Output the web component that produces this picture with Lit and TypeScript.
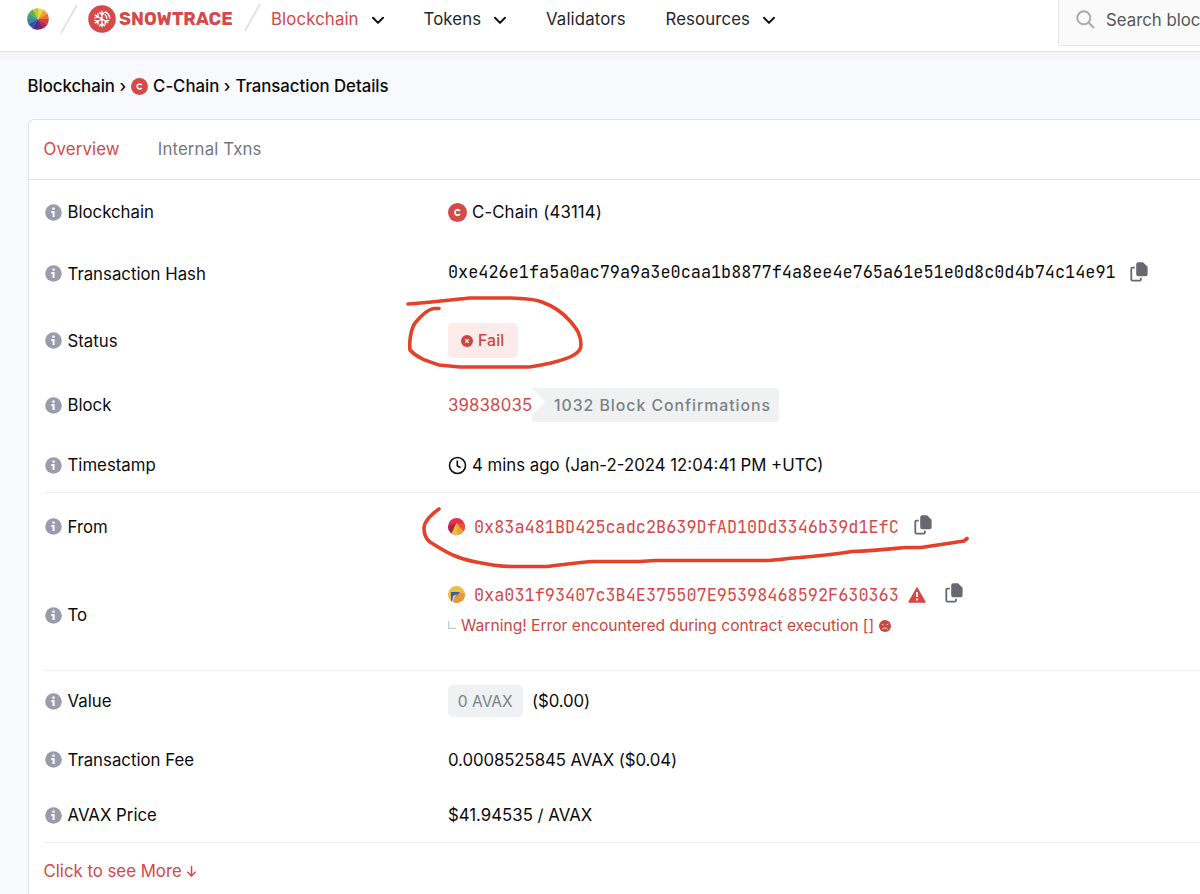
import { LitElement, html, css, svg } from "lit";
import { customElement, property } from "lit/decorators.js";

const shared = css`
  svg { display: block; flex: none; }
  .mono { font-family: "JetBrains Mono", "DejaVu Sans Mono", monospace; font-size: 16.86px; white-space: nowrap; }
  .red { color: #d54748; }
`;

const chainIcon = (size: number) => html`<svg width=${size} height=${size} viewBox="0 0 20 20">
  <circle cx="10" cy="10" r="10" fill="#d54a49" />
  <path d="M12.6 8.4A2.9 2.9 0 1 0 12.6 11.6" fill="none" stroke="#fff" stroke-width="1.9" />
</svg>`;

const chevron = html`<svg class="chev" width="14" height="9" viewBox="0 0 14 9">
  <path d="M2 1.8 7 6.9 12 1.8" fill="none" stroke="#111" stroke-width="2" stroke-linecap="round" stroke-linejoin="round" />
</svg>`;

const slash = html`<svg class="slash" width="18" height="30" viewBox="0 0 18 30">
  <path d="M1 29 17 1" stroke="#dedede" stroke-width="1.6" />
</svg>`;

const copyIcon = html`<svg width="18" height="20" viewBox="0 0 18 20">
  <path d="M8.2 0.3h4.8l4.6 4.4v7.6a2 2 0 0 1-2 2H8.2a2 2 0 0 1-2-2V2.3a2 2 0 0 1 2-2Z" fill="#666970" />
  <path d="M4.8 5.6H2.3a1 1 0 0 0-1 1v11a1 1 0 0 0 1 1h7.6a1 1 0 0 0 1-1v-1.9" fill="none" stroke="#666970" stroke-width="1.8" />
</svg>`;

const wheelColors = ["#f5d836", "#f2a431", "#e9732f", "#df3d35", "#b52a4e", "#6b2b73", "#45308a", "#3350a3", "#3484b9", "#3f9d8a", "#5fae4b", "#b4cc3c"];
const wheel = html`<svg width="22" height="22" viewBox="-11 -11 22 22">
  ${wheelColors.map((c, i) => {
    const a = (i * Math.PI) / 6 - Math.PI / 2;
    const b = a + Math.PI / 6 + 0.03;
    return svg`<path fill=${c} d="M0 0L${10.8 * Math.cos(a)} ${10.8 * Math.sin(a)}A10.8 10.8 0 0 1 ${10.8 * Math.cos(b)} ${10.8 * Math.sin(b)}Z" />`;
  })}
</svg>`;

const snowflake = html`<svg width="28" height="28" viewBox="-14 -14 28 28">
  <circle r="13.8" fill="#d54a49" />
  <g fill="none" stroke="#fff" stroke-width="1.4" stroke-linecap="round" stroke-linejoin="round">
    <path d="M0-7.8V7.8M-2.4-6.4 0-4 2.4-6.4M-2.4 6.8 0 4.3 2.4 6.8" />
    <path d="M0 0-6.8-3.8M0 0-6.8 3.8M-4.2-5.2-3.8-2.2-6.9-1.3M-4.2 5.2-3.8 2.2-6.9 1.3M0 0 5.8 3.6M3.3 5.4 3.2 2 6.8 1.4" />
    <path d="M3.4-7A7.6 7.6 0 0 1 7.8-1M3.2-4A4.4 4.4 0 0 1 4.8-.8" />
  </g>
</svg>`;

@customElement("site-header")
class SiteHeader extends LitElement {
  static styles = [shared, css`
    :host { display: flex; height: 51px; background: #fff; border-bottom: 1px solid #dcdde0; }
    .brand { display: flex; height: 38px; align-items: center; padding-left: 27px; width: 243px; box-sizing: border-box; flex: none; }
    .slash { margin: -1px 10px 0 11px; }
    .logo { display: flex; align-items: center; gap: 3px; width: 145px; flex: none; color: #d54a49; font: 700 18px Rubik, Inter, sans-serif; letter-spacing: 0.1px; }
    .end { margin: 3px 9px 0 1px; }
    nav { display: flex; height: 38px; align-items: center; color: #24262b; letter-spacing: 0.12px; }
    .item { display: flex; align-items: center; white-space: nowrap; box-sizing: border-box; }
    .chev { margin: 2px 0 0 12px; }
    .i1 { width: 152.5px; color: #d54748; }
    .i2 { width: 122.5px; }
    .i3 { width: 119.5px; }
    .i4 { width: 130px; }
    .search { margin-left: auto; width: 142px; height: 46px; flex: none; display: flex; align-items: center; box-sizing: border-box; border: 1px solid #e4e5e8; border-top: 0; border-right: 0; border-radius: 0 0 0 3px; background: #fafafa; color: #55575b; padding: 0 0 6px 17px; gap: 11px; white-space: nowrap; }
  `];
  render() {
    return html`
      <div class="brand">${wheel}${slash}<div class="logo">${snowflake}<span>SNOWTRACE</span></div></div>
      <svg class="end" width="18" height="30" viewBox="0 0 18 30"><path d="M1 28 16 1" stroke="#dedede" stroke-width="1.6" /></svg>
      <nav>
        <div class="item i1">Blockchain${chevron}</div>
        <div class="item i2">Tokens${chevron}</div>
        <div class="item i3">Validators</div>
        <div class="item i4">Resources${chevron}</div>
      </nav>
      <div class="search">
        <svg width="19" height="19" viewBox="0 0 19 19" fill="none" stroke="#a9abae" stroke-width="2"><circle cx="7.8" cy="7.8" r="6.5" /><path d="m12.5 12.5 5.5 5.5" /></svg>
        <span>Search bloc</span>
      </div>`;
  }
}

@customElement("detail-row")
class DetailRow extends LitElement {
  @property() label = "";
  static styles = [shared, css`
    :host { display: flex; align-items: center; box-sizing: border-box; flex: none; }
    .label { display: flex; align-items: center; gap: 6px; width: 404px; padding-left: 0.5px; flex: none; box-sizing: border-box; white-space: nowrap; }
  `];
  render() {
    return html`<div class="label">
        <svg width="17" height="17" viewBox="0 0 17 17"><circle cx="8.5" cy="8.5" r="8.3" fill="#9a9cab" />
          <rect x="7.3" y="3.4" width="2.5" height="2.3" rx=".6" fill="#fff" /><path d="M6.3 8.1H8.6V13" fill="none" stroke="#fff" stroke-width="2" /></svg>
        <span>${this.label}</span>
      </div><slot></slot>`;
  }
}

@customElement("app-root")
class AppRoot extends LitElement {
  static styles = [shared, css`
    :host { display: block; position: relative; width: 1200px; height: 894px; overflow: hidden; background: #f8f9fc; color: #0b0b0d; font: 16.8px Inter, sans-serif; }
    .band { height: 7px; background: #f5f5f6; }
    .crumbs { display: flex; align-items: center; height: 54px; padding-left: 27.5px; font-weight: 500; letter-spacing: -0.03px; white-space: nowrap; }
    .crumbs svg { margin: 0 5px 0 0; }
    .crumbs i { font-style: normal; margin: 0 5px 0 4.5px; }
    .card { margin-left: 28px; margin-top: 6px; width: 1190px; height: 800px; box-sizing: border-box; background: #fff; border: 1px solid #dfe1e5; border-radius: 6px; display: flex; flex-direction: column; }
    .tabs { display: flex; gap: 38px; height: 60px; box-sizing: border-box; align-items: center; padding: 0 0 1px 14.5px; border-bottom: 1px solid #dfe1e5; flex: none; letter-spacing: 0.15px; color: #74777e; }
    .rows { padding: 1px 0 0 15px; display: flex; flex-direction: column; white-space: nowrap; }
    .line { border-bottom: 1px solid #eceef0; }
    .val { display: flex; align-items: center; }
    .g5 { gap: 5px; }
    .chain { letter-spacing: 0.12px; }
    .hash { margin-top: -3px; }
    .fail { display: flex; align-items: center; gap: 5px; height: 35px; width: 70px; padding-left: 13px; box-sizing: border-box; border-radius: 5px; background: #fbebeb; color: #c9473f; font-size: 15.8px; font-weight: 450; letter-spacing: 0.1px; }
    .block { letter-spacing: 0.15px; width: 84px; margin-top: -1px; }
    .conf { height: 34px; width: 247px; display: flex; align-items: center; box-sizing: border-box; padding-left: 22px; border-radius: 0 4px 4px 0; background: #eff1f3; color: #7b8288; font-size: 15.8px; font-weight: 450; letter-spacing: 0.98px; clip-path: polygon(0 0, 100% 0, 100% 100%, 0 100%, 0 27px, 13px 14px); }
    .copy { margin-left: 14px; }
    .up { margin: -4px 0 0 15px; }
    .upto { margin-top: -3px; }
    .jazz { margin-right: 9px; }
    .alert { margin: 0 19px 0 9.5px; }
    .hook { margin-right: 5px; }
    .sad { margin: 2px 0 0 5px; }
    .to { display: flex; flex-direction: column; margin-top: -11px; }
    .to .val { height: 31px; }
    .to .warn { font-size: 15.6px; color: #c9473f; height: 30px; }
    .avax { background: #eff1f3; color: #7b8288; border-radius: 5px; width: 74.500px; height: 32px; display: flex; align-items: center; justify-content: center; font-size: 15.6px; margin-right: 9.5px; }
    .usd { letter-spacing: -0.1px; }
    .fee { letter-spacing: -0.08px; }
    .more { display: flex; gap: 4px; align-items: center; height: 56px; margin-left: -0.5px; }
    .r62 { height: 62px; } .r61 { height: 61px; } .r73 { height: 73px; } .r56 { height: 56px; }
    .r59 { height: 60px; padding-top: 5px; } .r67 { height: 67px; } .r110 { height: 111px; } .r60 { height: 60px; }
    .r58 { height: 57px; } .r53 { height: 55px; }
    .ink { position: absolute; left: 0; top: 0; pointer-events: none; }
  `];
  render() {
    return html`
      <site-header></site-header>
      <div class="band"></div>
      <div class="crumbs">Blockchain<i>›</i>${chainIcon(17)}C-Chain<i>›</i>Transaction Details</div>
      <div class="card">
        <div class="tabs"><span class="red">Overview</span><span>Internal Txns</span></div>
        <div class="rows">
          <detail-row class="r62" label="Blockchain"><div class="val g5">${chainIcon(19)}<span class="chain">C-Chain (43114)</span></div></detail-row>
          <detail-row class="r61" label="Transaction Hash"><div class="val hash"><span class="mono">0xe426e1fa5a0ac79a9a3e0caa1b8877f4a8ee4e765a61e51e0d8c0d4b74c14e91</span><span class="copy">${copyIcon}</span></div></detail-row>
          <detail-row class="r73" label="Status"><div class="fail"><svg width="12" height="12" viewBox="0 0 12 12"><circle cx="6" cy="6" r="6" fill="#c9473f" /><path d="m4.2 4.2 3.6 3.6m0-3.6-3.6 3.6" stroke="#fff" stroke-width="1.2" /></svg>Fail</div></detail-row>
          <detail-row class="r56" label="Block"><div class="val"><span class="block red">39838035</span><span class="conf">1032 Block Confirmations</span></div></detail-row>
          <detail-row class="r59 line" label="Timestamp"><div class="val g5"><svg width="19" height="19" viewBox="0 0 19 19" fill="none" stroke="#111" stroke-width="1.6"><circle cx="9.5" cy="9.5" r="8" /><path d="M9.3 4.6v5.200l3.200 2" /></svg><span>4 mins ago (Jan-2-2024 12:04:41 PM +UTC)</span></div></detail-row>
          <detail-row class="r67" label="From"><div class="val">
            <svg class="jazz" width="17" height="17" viewBox="0 0 17 17"><defs><clipPath id="c1"><circle cx="8.5" cy="8.5" r="8.5" /></clipPath></defs><g clip-path="url(#c1)"><path d="M0 0h17v17H0Z" fill="#e5304f" /><path d="M0 8 8.500 5 4 17H0Z" fill="#a92644" /><path d="M8.500 5 17 11v6H3Z" fill="#f0a233" /><path d="M8.500 5 17 6v9Z" fill="#e65335" /><path d="M8.500 5 9.500 17H3Z" fill="#efc03b" /></g></svg>
            <span class="mono red">0x83a481BD425cadc2B639DfAD10Dd3346b39d1EfC</span><span class="up">${copyIcon}</span></div></detail-row>
          <detail-row class="r110 line" label="To"><div class="to">
            <div class="val">
              <svg class="jazz" width="17" height="17" viewBox="0 0 17 17"><defs><clipPath id="c2"><circle cx="8.5" cy="8.5" r="8.5" /></clipPath></defs><g clip-path="url(#c2)"><path d="M0 0h17v17H0Z" fill="#e9be43" /><path d="M9 7H17v10H5Z" fill="#e5983e" /><path d="M3 6h9L3 16Z" fill="#3d5aa8" /><path d="m5 10 4-2-5 8Z" fill="#d8d0c0" /></g></svg>
              <span class="mono red">0xa031f93407c3B4E375507E95398468592F630363</span>
              <svg class="alert" width="18" height="16" viewBox="0 0 18 16"><path d="M9 1 17 15H1Z" fill="#d54748" stroke="#d54748" stroke-width="1.5" stroke-linejoin="round" /><path d="M9 5v5M9 11.500v2" stroke="#fff" stroke-width="1.7" /></svg><span class="upto">${copyIcon}</span>
            </div>
            <div class="val warn"><svg class="hook" width="8" height="8" viewBox="0 0 8 8"><path d="M.7 0v7.300H8" fill="none" stroke="#c5cad0" stroke-width="1.3" /></svg><span>Warning! Error encountered during contract execution []</span>
              <svg class="sad" width="12" height="12" viewBox="0 0 12 12"><circle cx="6" cy="6" r="6" fill="#c9473f" /><path d="M3.400 9q2.600-2.500 5.200 0M2.600 4l2 1M9.400 4l-2 1" fill="none" stroke="#fbd5d5" stroke-width="1" /></svg></div>
          </div></detail-row>
          <detail-row class="r60" label="Value"><div class="val"><span class="avax">0 AVAX</span><span class="usd">($0.00)</span></div></detail-row>
          <detail-row class="r58" label="Transaction Fee"><span class="fee">0.0008525845 AVAX ($0.04)</span></detail-row>
          <detail-row class="r53 line" label="AVAX Price"><span>$41.94535 / AVAX</span></detail-row>
          <div class="more red"><span>Click to see More</span><svg width="11" height="12" viewBox="0 0 11 12"><path d="M5.5 1v10M1.3 6.800 5.500 11 9.700 6.800" fill="none" stroke="#d54748" stroke-width="1.5" /></svg></div>
        </div>
      </div>
      <svg class="ink" width="1200" height="894" fill="none" stroke="#e4402a" stroke-width="3.6" stroke-linecap="round" stroke-linejoin="round">
        <path d="M408 304C428 303 448 300 470 298L511 298C524 299 531 298 542 302C553 306 564 314 570 321C577 329 581 335 581 345C581 355 566 359 551 363C540 365 533 367 526 367H460L439 365C427 361 417 358 410 350C409 341 411 329 415 323C420 317 428 309 434 308.500H439" />
        <path d="M439 509C433 513 424 521 424 528C424 533 426 539 430 542C443 550 454 558 476 562C490 565 500 566.500 512 566.500H547C561 565 580 562 594 561.500H640L655 560.500H768C782 560 789 558 800 557.500C818 556 835 554.500 852 551.500C873 551 890 549 905 547.500L921 547.500L964 541L967 538.500" />
      </svg>`;
  }
}
